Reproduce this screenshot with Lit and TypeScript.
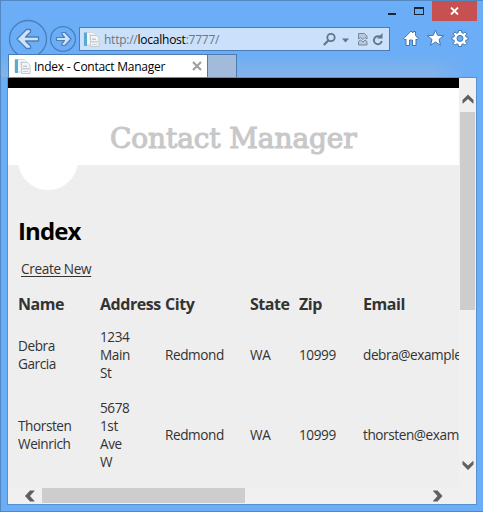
import { LitElement, html, css, svg } from "lit";
import { customElement } from "lit/decorators.js";

const pageIcon = html`<svg class="page-icon" width="17" height="17" viewBox="0 0 17 17">
  <path d="M1 1.500h9l2 2V14H1z" fill="#f5f7f9" stroke="#d0d8de" />
  <path d="M1 1.500h3V15H1z" fill="#58a9d5" />
  <path d="M6 4h4M6 6h3M6 8h2" stroke="#d5dade" />
  <path d="M7.500 4.500h6l2.500 2.500v8.500h-8.500z" fill="#f3f5f6" stroke="#c3cad0" />
  <path d="M9 7.500h4v1.500h-4z" fill="#c3cacf" />
  <path d="M7 10h8v1.500H7zM9 13h5v1h-5z" fill="#c8ced3" />
</svg>`;

const chevrons: Record<string, string> = {
  up: "M.5 8 6 2.500 11.500 8V11.500H11L6 7 1 11.500H.5Z",
  down: "M.5 3.500 6 9 11.500 3.500V0H11L6 4.500 1 0H.5Z",
  left: "M9.500 .5H5L0 6 5 11.500H9.500V11L5 6 9.500 1Z",
  right: "M0 .5H4.500L9.500 6 4.500 11.500H0V11L4.500 6 0 1Z",
};
const chevron = (dir: string) =>
  html`<svg class="chev ${dir}" width="12" height="12" viewBox="0 0 12 12">${svg`<path d=${chevrons[dir]} fill="#606060" />`}</svg>`;

@customElement("contact-page")
class ContactPage extends LitElement {
  static styles = css`
    :host { display: block; width: 451px; height: 409px; overflow: hidden; background: #eee; color: #333;
      font: 13.6px/18px "Open Sans", "Noto Sans", sans-serif; }
    header { box-sizing: border-box; height: 87px; border-top: 10px solid #000; background: #fff; position: relative; }
    .disc { position: absolute; left: 10px; top: 42px; width: 60px; height: 60px; border-radius: 50%; background: #fff; }
    .title { position: relative; margin: 0; padding: 34px 0 0 102px; white-space: nowrap; color: #c8c8c8;
      font: 28px/33px "DejaVu Serif", serif; -webkit-text-stroke: 1.1px #c8c8c8; letter-spacing: -0.1px; }
    h2 { margin: 50px 0 0 10px; font-size: 24px; line-height: 32px; color: #000; font-weight: 700; letter-spacing: -0.9px; }
    .create { margin: 13px 0 0 13px; }
    a { color: #333; text-decoration: underline; text-underline-offset: 2px; letter-spacing: -0.35px; }
    table { table-layout: fixed; width: 520px; margin: 14px 0 0 10px; border-collapse: collapse; }
    th, td { padding: 0; text-align: left; white-space: nowrap; vertical-align: middle; }
    th { height: 24px; font-size: 16px; line-height: 24px; letter-spacing: -0.45px; }
    td { letter-spacing: -0.42px; }
    .r1 td { height: 78px; }
    .r2 td { height: 81px; }
    .c1 { width: 82px; } .c2 { width: 65px; } .c3 { width: 85px; }
    .c4 { width: 49px; } .c5 { width: 64px; } .c6 { width: 175px; }
  `;
  render() {
    const rows = [
      [["Debra", "Garcia"], ["1234", "Main", "St"], ["Redmond"], ["WA"], ["10999"], ["debra@example.com"]],
      [["Thorsten", "Weinrich"], ["5678", "1st", "Ave", "W"], ["Redmond"], ["WA"], ["10999"], ["thorsten@example.com"]],
    ];
    return html`<header><div class="disc"></div><h1 class="title">Contact Manager</h1></header>
      <h2>Index</h2>
      <div class="create"><a>Create New</a></div>
      <table>
        <thead><tr>${["Name", "Address", "City", "State", "Zip", "Email"].map((t, i) => html`<th class="c${i + 1}">${t}</th>`)}</tr></thead>
        <tbody>${rows.map((r, i) => html`<tr class="r${i + 1}">${r.map((c) => html`<td>${c.map((l) => html`<div>${l}</div>`)}</td>`)}</tr>`)}</tbody>
      </table>`;
  }
}

@customElement("app-root")
class AppRoot extends LitElement {
  static styles = css`
    :host { display: block; box-sizing: border-box; width: 483px; height: 512px; overflow: hidden; background: #6badf6;
      border: 1px solid #5288c0; border-right: 0; font: 12px/16px "Open Sans", "Noto Sans", sans-serif; color: #000; }
    svg { display: block; flex: none; }
    .titlebar { height: 26px; display: flex; justify-content: flex-end; align-items: flex-start; padding-right: 6px; }
    .titlebar .wm { margin: 5px 7px 0 0; }
    .close { width: 45px; height: 20px; background: #c75050; display: flex; align-items: center; justify-content: center; }
    .nav { height: 27px; display: flex; align-items: flex-start; }
    .nav-btns { margin: -8px 0 0 7px; }
    .address { box-sizing: border-box; width: 311px; height: 24px; margin-left: 1px; border: 1px solid #4a7db5; background: #cbe1fb;
      display: flex; align-items: center; padding-left: 3px; }
    .url { margin-left: 4px; color: #6e767e; letter-spacing: -0.24px; width: 215px; position: relative; top: 1px; }
    .url b { font-weight: 400; color: #000; }
    .tools { margin: 2px 0 0 13px; }
    .tabs { height: 23px; display: flex; padding-left: 7px; position: relative;
      background: linear-gradient(90deg, transparent 430px, #6badf6 468px), linear-gradient(#6badf6, #86b3e8); }
    .tab { box-sizing: border-box; width: 200px; height: 23px; border: 1px solid #4a7db5; border-bottom: 0; background: #fff;
      display: flex; align-items: center; padding-left: 5px; }
    .tab span { margin-left: 3px; width: 158px; white-space: nowrap; letter-spacing: -0.26px; position: relative; top: 1px; }
    .newtab { box-sizing: border-box; width: 29px; height: 23px; border: 1px solid #4a7db5; border-left: 0; border-bottom: 0; background: #a2bbda; }
    .view { box-sizing: border-box; width: 470px; height: 428px; margin-left: 6px; border: 1px solid #5590cf; background: #f0f0f0;
      display: grid; grid-template: 409px 17px / 451px 17px; }
    .vs { display: flex; flex-direction: column; align-items: center; }
    .up { margin: 14px 0 0 0; }
    .vthumb { width: 15px; height: 198px; margin: 8px 0 0 0; background: #cdcdcd; }
    .down { margin: 151px 0 0 0; }
    .hs { display: flex; align-items: center; }
    .left { margin-left: 17px; }
    .hthumb { width: 203px; height: 15px; margin-left: 5px; background: #cdcdcd; }
    .right { margin-left: 188px; }
  `;
  render() {
    return html`
      <div class="titlebar">
        <svg class="wm" width="38" height="12" viewBox="0 0 38 12"><path d="M1 7h8v2H1zM27 1h10v8H27zm1 2v5h8V3z" fill="#1c2733" fill-rule="evenodd" /></svg>
        <div class="close"><svg width="9" height="8" viewBox="0 0 9 8"><path d="M1 .5 8 7.500M8 .5 1 7.500" stroke="#fff" stroke-width="1.800" /></svg></div>
      </div>
      <div class="nav">
        <svg class="nav-btns" width="70" height="42" viewBox="0 0 70 42">
          <g fill="none" stroke="#4a7fba" stroke-width="1.300"><circle cx="20" cy="20" r="18.500" /><circle cx="55" cy="20" r="12.400" /></g>
          <path d="M9 20 18.500 10.500H22.500V13L17.500 18H30.500V22H17.500L22.500 27V29.500H18.500Z" fill="#cfe4fb" stroke="#4a7fba" stroke-width="1.300" stroke-linejoin="round" />
          <path d="M63 20 57 13.500H54V15.500L56.500 18.500H48.500V21.500H56.500L54 24.500V26.500H57Z" fill="#cfe4fb" stroke="#4a7fba" stroke-width="1.200" stroke-linejoin="round" />
        </svg>
        <div class="address">
          ${pageIcon}<span class="url">http://<b>localhost</b>:7777/</span>
          <svg width="66" height="16" viewBox="0 0 66 16">
            <g fill="none" stroke="#62768a"><circle cx="12" cy="6.500" r="3.700" stroke-width="1.800" /><path d="M9.300 9.500 4.800 14" stroke-width="2.200" /></g>
            <path d="M23 7.500h7l-3.500 4z" fill="#62768a" />
            <path d="M39.500 2.500h6l2.500 2.500v3l-2-1.500-2 2-2.500-2-2 1.500zM39.500 10.500l2-1.500 2.500 2 2-2 2 1.500V14h-8.500z" fill="#b9c8d5" stroke="#74899b" />
            <path d="M61.500 6.200A4 4 0 1 0 62.800 10" fill="none" stroke="#62768a" stroke-width="1.900" /><path d="M63.500 2v5.500H58z" fill="#62768a" />
          </svg>
        </div>
        <svg class="tools" width="66" height="19" viewBox="0 0 66 19" fill="#fff" stroke="#4277ad" stroke-linejoin="round">
          <path d="M.8 9.500 8 2l2 2V2.500h2.500V6.500L15.200 9.500 14 11 13 10v6.500H9.500V11H6.500v5.500H3V10L2 11z" />
          <path d="m32.500 1 2.200 5.300 5.800.4-4.500 3.700 1.500 5.800-5-3.200-5 3.200 1.500-5.800-4.500-3.700 5.800-.4z" />
          <path fill-rule="evenodd" d="M55.500 1.500h3l.3 2.200 1.500.6 1.800-1.400 1.700 1.800-1.300 1.800.6 1.500 2 .3v2.400l-2 .4-.6 1.500 1.300 1.700-1.800 1.900-1.800-1.300-1.400.5-.3 2.100h-3l-.3-2.100-1.400-.5-1.800 1.300-1.800-1.900 1.300-1.700-.6-1.500-2-.4V8.300l2-.3.6-1.500-1.300-1.800 1.700-1.800 1.900 1.400 1.400-.6zM57 6.400a3 3 0 1 0 0 6A3 3 0 0 0 57 6.400z" />
        </svg>
      </div>
      <div class="tabs">
        <div class="tab">${pageIcon}<span>Index - Contact Manager</span>
          <svg width="10" height="10" viewBox="0 0 10 10"><path d="M1 1 9 9M9 1 1 9" stroke="#a0a0a0" stroke-width="2.200" /></svg>
        </div>
        <div class="newtab"></div>
      </div>
      <div class="view">
        <contact-page></contact-page>
        <div class="vs">${chevron("up")}<div class="vthumb"></div>${chevron("down")}</div>
        <div class="hs">${chevron("left")}<div class="hthumb"></div>${chevron("right")}</div>
      </div>`;
  }
}
